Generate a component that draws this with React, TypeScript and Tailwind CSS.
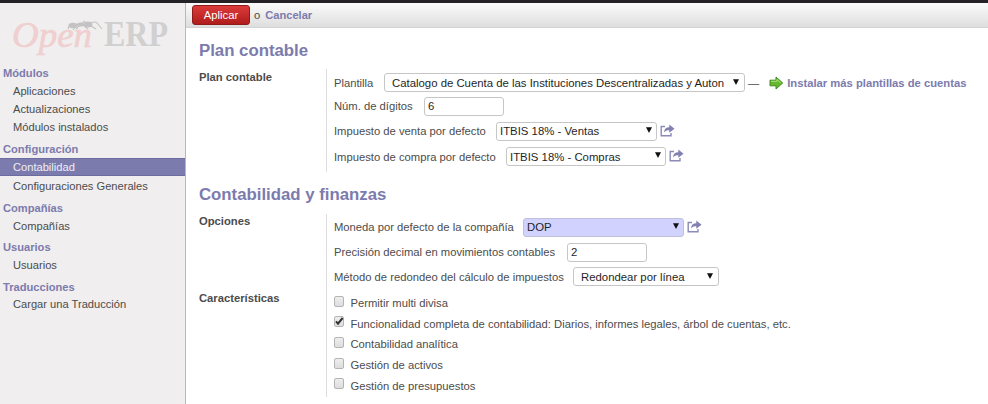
import React from "react";

type Item = { label: string; kind: "head" | "item" | "active"; cls: string };

const menu: Item[] = [
  { label: "Módulos", kind: "head", cls: "" },
  { label: "Aplicaciones", kind: "item", cls: "" },
  { label: "Actualizaciones", kind: "item", cls: "" },
  { label: "Módulos instalados", kind: "item", cls: "" },
  { label: "Configuración", kind: "head", cls: "mt-1" },
  { label: "Contabilidad", kind: "active", cls: "" },
  { label: "Configuraciones Generales", kind: "item", cls: "mt-px" },
  { label: "Compañías", kind: "head", cls: "mt-1" },
  { label: "Compañías", kind: "item", cls: "" },
  { label: "Usuarios", kind: "head", cls: "mt-[3px]" },
  { label: "Usuarios", kind: "item", cls: "" },
  { label: "Traducciones", kind: "head", cls: "mt-1" },
  { label: "Cargar una Traducción", kind: "item", cls: "-mt-px" },
];

const kindClass = {
  head: "pl-[3px] font-bold text-[#7c7bad]",
  item: "pl-[13px] text-[#4c4c4c]",
  active: "pl-[13px] text-[#eeeef6] bg-[#7c7bad] border-y border-[#6d6ca0]",
};

function Logo() {
  return (
    <svg width="184" height="54" viewBox="0 0 184 54" className="block overflow-visible">
      <text x="12" y="38" fontSize="36" fontStyle="italic" fontFamily="Liberation Serif, serif" fill="#efcfcf" stroke="#efcfcf" strokeWidth=".6" textLength="80" lengthAdjust="spacingAndGlyphs">Open</text>
      <text x="104" y="37" fontSize="35" fontWeight="bold" fontFamily="Liberation Serif, serif" fill="#d0d0d0" textLength="64" lengthAdjust="spacingAndGlyphs">ERP</text>
      <g fill="#c4c2c2" stroke="#c4c2c2">
        <ellipse cx="73" cy="16.5" rx="4.5" ry="2.8" stroke="none" />
        <ellipse cx="80.5" cy="15.5" rx="3.6" ry="2" stroke="none" />
        <ellipse cx="88" cy="15.5" rx="4.4" ry="3" stroke="none" />
        <path d="M69 17l-1 3M76 17l-3 4M80 16l-4 4M83 16l5 4M82 14l3-2M91 14q4-2 6 0l5 6M91 17l5 3" fill="none" strokeWidth="1.1" />
      </g>
    </svg>
  );
}

function ShareIcon() {
  return (
    <svg width="15" height="13" viewBox="0 0 15 13" className="-mt-[2px] ml-[3px] block shrink-0">
      <path d="M5 2.5H1.2v9.2h9.8V9" fill="none" stroke="#8b8ab8" strokeWidth="1.4" />
      <path d="M4 8.5C4.2 5 6 3.2 9.3 3.2V.5l5.2 4.2-5.2 4V6.2C7 6.2 5.2 6.8 4 8.5z" fill="#8280b2" />
    </svg>
  );
}

function Select({ text, w, pad = "pl-[3px]", tone = "bg-white border-[#c6c6c6]", arrow = "mr-[4px] -mt-[3px]" }: { text: string; w: string; pad?: string; tone?: string; arrow?: string }) {
  return (
    <div className={`flex h-[19px] shrink-0 items-center justify-between rounded-[3px] border text-[11.36px] text-[#1f1f1f] ${w} ${pad} ${tone}`}>
      <span>{text}</span>
      <svg width="6" height="6" viewBox="0 0 6 6" className={`shrink-0 ${arrow}`}>
        <path d="M0 .3h6L3 6z" fill="#111" />
      </svg>
    </div>
  );
}

function Input({ value }: { value: string }) {
  return <div className="flex h-[19px] w-20 shrink-0 items-center rounded-[3px] border border-[#c6c6c6] bg-white pl-[3px] text-[11.36px] text-[#1f1f1f]">{value}</div>;
}

function Row({ label, w, h, children }: { label: string; w: string; h: string; children: React.ReactNode }) {
  return (
    <div className={`flex items-center ${h}`}>
      <span className={`shrink-0 ${w}`}>{label}</span>
      {children}
    </div>
  );
}

function Check({ label, on = false }: { label: string; on?: boolean }) {
  return (
    <div className="flex h-[20.6px] items-center">
      <span className="-mt-[4px] flex h-[11px] w-[10px] shrink-0 rounded-[2px] border border-[#b4b4b4] bg-linear-to-b from-[#eeeeee] to-[#dddddd]">
        {on && (
          <svg width="10" height="10" viewBox="0 0 10 10" className="-mt-px -ml-px shrink-0 overflow-visible">
            <path d="M2 5.4l2 2.3L8.6 2" fill="none" stroke="#333" strokeWidth="2" />
          </svg>
        )}
      </span>
      <span className="ml-[6.5px]">{label}</span>
    </div>
  );
}

export default function App() {
  return (
    <div className="flex h-[404px] w-[988px] flex-col overflow-hidden whitespace-nowrap bg-white font-['Liberation_Sans',Arial,sans-serif] text-[11.24px] leading-[14px] text-[#4c4c4c]">
      <div className="h-[3px] shrink-0 bg-[#242224]" />
      <div className="flex min-h-0 flex-1">
        <aside className="w-[186px] shrink-0 border-r border-[#b8b8b8] bg-[#f0eeee] text-[11.14px]">
          <div className="h-[61px] pt-[6px]"><Logo /></div>
          {menu.map((m, i) => (
            <div key={i} className={`flex h-[18px] items-center ${kindClass[m.kind]} ${m.cls}`}>{m.label}</div>
          ))}
        </aside>
        <main className="min-w-0 flex-1">
          <div className="flex h-[25px] items-center border-b border-[#d2d2d2] bg-linear-to-b from-[#fbfbfb] to-[#dedede] pl-[6px]">
            <button className="h-5 w-[58px] rounded-[3px] border border-[#8f1a1a] bg-linear-to-b from-[#dc3a3a] to-[#b01c1c] text-white">Aplicar</button>
            <span className="ml-[4px]">o</span>
            <span className="ml-[5px] text-[11.1px] font-bold text-[#7c7bad]">Cancelar</span>
          </div>
          <div className="pl-[13px]">
            <h1 className="mt-[13px] h-[28px] text-[16.8px] leading-5 font-bold text-[#7c7bad]">Plan contable</h1>
            <div className="flex h-[103px]">
              <div className="w-[127px] pt-px font-bold">Plan contable</div>
              <div className="border-l border-[#dddddd] pt-[2px] pl-[7px]">
                <Row label="Plantilla" w="w-[50px]" h="h-[23px]">
                  <Select text="Catalogo de Cuenta de las Instituciones Descentralizadas y Auton" w="w-[361px]" pad="pl-[7px]" arrow="mr-[5px] -mt-px" />
                  <span className="ml-[3px]">—</span>
                  <svg width="15" height="14" viewBox="0 0 15 14" className="ml-[10px] shrink-0">
                    <path d="M1 4.2h6V1l6.7 6L7 13V9.8H1z" fill="#65b82e" stroke="#3f8a24" />
                    <path d="M2 5.3h6V3.5l3.8 3.4" fill="none" stroke="#b1e27c" />
                  </svg>
                  <span className="ml-[3px] font-bold text-[#7c7bad]">Instalar más plantillas de cuentas</span>
                </Row>
                <Row label="Núm. de dígitos" w="w-[90px]" h="h-[24px]"><Input value="6" /></Row>
                <Row label="Impuesto de venta por defecto" w="w-[162px]" h="h-[26px]"><Select text="ITBIS 18% - Ventas" w="w-[161px]" /><ShareIcon /></Row>
                <Row label="Impuesto de compra por defecto" w="w-[172px]" h="h-[25px]"><Select text="ITBIS 18% - Compras" w="w-[160px]" /><ShareIcon /></Row>
              </div>
            </div>
            <h1 className="mt-[13px] h-[29px] text-[16.8px] leading-5 font-bold text-[#7c7bad]">Contabilidad y finanzas</h1>
            <div className="flex h-[183px]">
              <div className="w-[127px] font-bold">
                <div className="h-[77px]">Opciones</div>
                <div>Características</div>
              </div>
              <div className="border-l border-[#dddddd] pl-[7px]">
                <Row label="Moneda por defecto de la compañía" w="w-[189px]" h="h-[26px]"><Select text="DOP" w="w-[161px]" tone="bg-[#d2d2ff] border-[#c0c0dd]" /><ShareIcon /></Row>
                <Row label="Precisión decimal en movimientos contables" w="w-[233px]" h="h-[24px]"><Input value="2" /></Row>
                <Row label="Método de redondeo del cálculo de impuestos" w="w-[239px]" h="h-[25px]"><Select text="Redondear por línea" w="w-[146px]" pad="pl-[7px]" arrow="mr-[5px] -mt-px" /></Row>
                <div className="pt-[4px]">
                  <Check label="Permitir multi divisa" />
                  <Check label="Funcionalidad completa de contabilidad: Diarios, informes legales, árbol de cuentas, etc." on />
                  <Check label="Contabilidad analítica" />
                  <Check label="Gestión de activos" />
                  <Check label="Gestión de presupuestos" />
                </div>
              </div>
            </div>
          </div>
        </main>
      </div>
    </div>
  );
}
